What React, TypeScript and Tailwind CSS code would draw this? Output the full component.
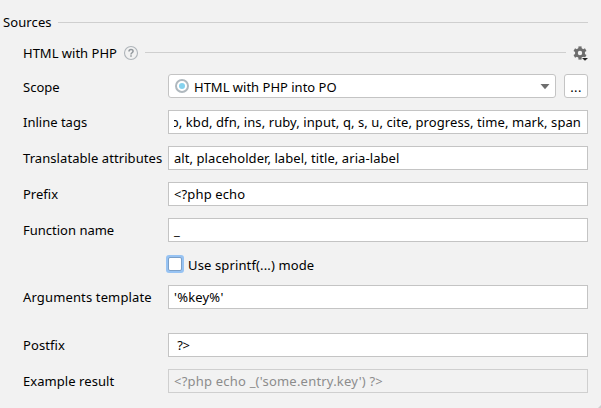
import type { ReactNode } from "react";

function Row({ label, labelClass = "", children, className = "" }: { label: string; labelClass?: string; children: ReactNode; className?: string }) {
  return (
    <div className={`flex h-6 pl-[23px] ${className}`}>
      <div className="w-[145px] shrink-0">
        <span className={labelClass}>{label}</span>
      </div>
      {children}
    </div>
  );
}

function Field({ children, disabled = false }: { children: ReactNode; disabled?: boolean }) {
  return (
    <div
      className={`flex h-6 w-[420px] border px-[5px] leading-[22px] ${
        disabled ? "border-[#cfcfcf] bg-[#f2f2f2] text-[#8c8c8c]" : "border-[#c4c4c4] bg-white"
      }`}
    >
      {children}
    </div>
  );
}

function Gear() {
  return (
    <svg width="16" height="17" viewBox="0 0 16 17">
      <g fill="#6e6e6e">
        <path
          fillRule="evenodd"
          d="M7 3a5 5 0 1 1 0 10A5 5 0 0 1 7 3zm0 2.8a2.2 2.2 0 1 0 0 4.4 2.2 2.2 0 0 0 0-4.4z"
        />
        {[0, 60, 120, 180, 240, 300].map((a) => (
          <rect key={a} x="5.4" y="1.4" width="3.2" height="3" transform={`rotate(${a} 7 8)`} />
        ))}
      </g>
      <path d="M8.6 12.2h6l-1 2h-4z" fill="#f2f2f2" />
      <path d="M9 13h6l-3 2.8z" fill="#222" />
    </svg>
  );
}

export default function App() {
  return (
    <div className="relative h-[408px] w-[601px] overflow-hidden whitespace-pre bg-[#f2f2f2] font-['Noto_Sans',sans-serif] text-[13px] leading-6 text-black">
      <div className="mt-[10px] flex h-6 pl-[3px]">
        <span className="w-[55px] tracking-[0.1px]">Sources</span>
        <div className="mt-3 h-px w-[530px] bg-[#cfcfcf]" />
      </div>
      <div className="mt-[7px] flex h-6 pl-[23px]">
        <span className="w-[100px]">HTML with PHP</span>
        <svg className="mt-[4px] w-4 shrink-0" width="16" height="16" viewBox="0 0 16 16">
          <circle cx="8" cy="8" r="6.5" fill="none" stroke="#afb5ba" strokeWidth="1.1" />
          <path d="M6 6.5C6 3.9 10.1 3.9 10.1 6.3 10.1 7.7 8 7.8 8 9.4M8 10.3v1.5" fill="none" stroke="#92989d" strokeWidth="1.5" />
        </svg>
        <div className="ml-[6px] mt-[11px] h-px w-[421px] bg-[#cfcfcf]" />
        <div className="ml-[7px] mt-[4px]">
          <Gear />
        </div>
      </div>

      <div className="mt-[9px] flex h-6 pl-[23px]">
        <span className="w-[145px] shrink-0 pt-px">Scope</span>
        <div className="flex h-6 w-[388px] rounded-[3px] border border-[#c4c4c4] bg-white pl-[5px] pr-[5px]">
          <svg className="mt-[3px] shrink-0" width="16" height="16" viewBox="0 0 16 16">
            <circle cx="8" cy="8" r="6" fill="none" stroke="#afb8be" strokeWidth="2" />
            <circle cx="8" cy="8" r="3" fill="#85d2ee" />
          </svg>
          <span className="ml-1">HTML with PHP into PO</span>
          <svg className="ml-auto mt-[9px]" width="10" height="6" viewBox="0 0 10 6">
            <path d="M0.5 0h9L5 5.3z" fill="#6e6e6e" />
          </svg>
        </div>
        <div className="ml-2 h-6 w-6 rounded-[3px] border border-[#c4c4c4] bg-white text-center tracking-[0.4px]">...</div>
      </div>

      <Row label="Inline tags" className="mt-3">
        <Field>
          <div className="flex w-[407px] justify-end overflow-hidden">
            <span className="tracking-[0.085px]">b, kbd, dfn, ins, ruby, input, q, s, u, cite, progress, time, mark, span</span>
          </div>
        </Field>
      </Row>
      <Row label="Translatable attributes" labelClass="tracking-[0.07px]" className="mt-3">
        <Field>
          <span className="tracking-[0.07px]">alt, placeholder, label, title, aria-label</span>
        </Field>
      </Row>
      <Row label="Prefix" className="mt-3">
        <Field>
          <span className="tracking-[0.13px]">{"<?php echo"}</span>
        </Field>
      </Row>
      <Row label="Function name" className="mt-3">
        <Field>_</Field>
      </Row>

      <div className="mt-[11px] flex h-6 pl-[166px]">
        <div className="mt-[2px] h-[18px] w-[18px] rounded-[3px] bg-[#97c3f3] p-[2px]">
          <div className="h-[14px] w-[14px] rounded-[2px] border border-[#7b9fc7] bg-white" />
        </div>
        <span className="ml-[4px] tracking-[0.13px]">Use sprintf(...) mode</span>
      </div>

      <Row label="Arguments template" labelClass="tracking-[0.14px]" className="mt-[8px]">
        <Field>
          <span className="tracking-[0.2px]">{"'%key%'"}</span>
        </Field>
      </Row>
      <Row label="Postfix" labelClass="tracking-[0.08px]" className="mt-6">
        <Field>
          <span className="-tracking-[0.2px]">{" ?>"}</span>
        </Field>
      </Row>
      <Row label="Example result" labelClass="tracking-[0.06px]" className="mt-3">
        <Field disabled>
          <span className="tracking-[0.21px]">{"<?php echo _('some.entry.key') ?>"}</span>
        </Field>
      </Row>
      <svg className="absolute bottom-0 right-0" width="3" height="3" viewBox="0 0 3 3">
        <path d="M3 0v3H0z" fill="#cfcfcf" />
      </svg>
    </div>
  );
}
